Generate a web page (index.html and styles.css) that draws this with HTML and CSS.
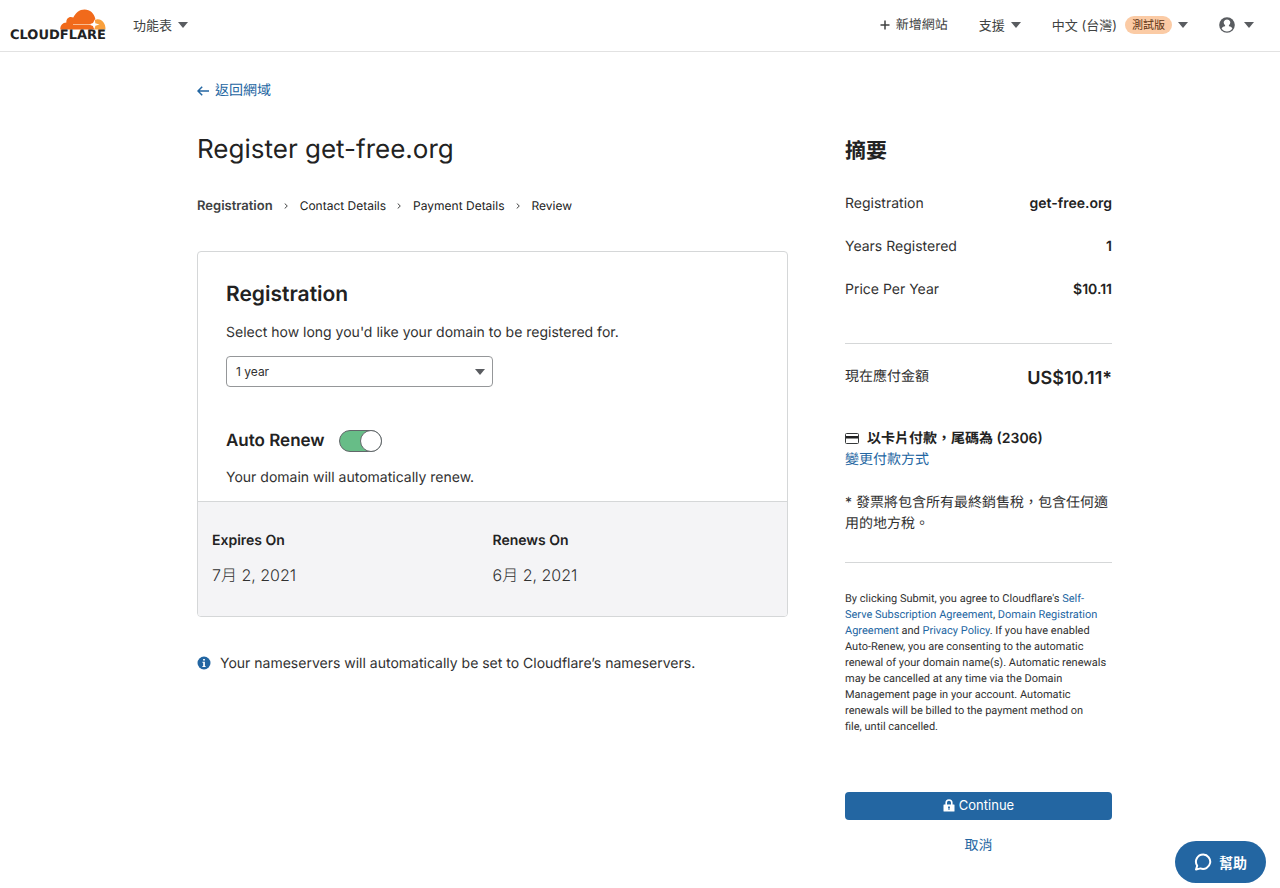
FILE: index.html
```html
<!DOCTYPE html>
<html lang="zh-Hant-TW">
<head>
<meta charset="utf-8">
<meta name="viewport" content="width=device-width, initial-scale=1">
<title>Register get-free.org | Cloudflare</title>
<link rel="stylesheet" href="styles.css">
</head>
<body>
<header class="topbar">
  <a class="logo" href="#" aria-label="Cloudflare">
    <svg class="logo-cloud" viewBox="0 0 46 21" aria-hidden="true">
      <path fill="#f9a03c" d="M34 20.500C33.500 15 33.500 11 37 10.300C42 9.800 45.600 14.200 45.500 20.500Z"/>
      <path fill="#f16a1b" d="M.3 20.500C.2 16.200 2.600 13.700 6.400 13.500C5.900 9.500 9.500 6.700 13.300 8.600C15.400 3.800 19.500.4 24.600.4C30 .4 34.100 4.200 35.300 9.700L34.500 20.500Z"/>
      <path fill="#fff" d="M34.900 10.200L35.300 14.300L39.500 15.500L35.400 16.700L34.300 20.500L32.900 16.900L29 15.500L33 14Z"/>
      <path fill="none" stroke="#fbd0ad" stroke-width=".8" d="M13 15.500H31"/>
    </svg>
    <span class="wordmark">CLOUDFLARE</span>
  </a>
  <button class="nav-item" type="button">功能表<svg class="caret" viewBox="0 0 10 6" aria-hidden="true"><path d="M0 0H10L5 6Z"/></svg></button>
  <nav class="topnav">
    <a class="nav-item add-site" href="#"><svg class="plus" viewBox="0 0 10 10" aria-hidden="true"><path d="M5 .5V9.500M.5 5H9.500"/></svg>新增網站</a>
    <button class="nav-item" type="button">支援<svg class="caret" viewBox="0 0 10 6" aria-hidden="true"><path d="M0 0H10L5 6Z"/></svg></button>
    <button class="nav-item" type="button">中文 (台灣)<span class="badge">測試版</span><svg class="caret" viewBox="0 0 10 6" aria-hidden="true"><path d="M0 0H10L5 6Z"/></svg></button>
    <button class="nav-item account" type="button" aria-label="Account"><svg class="user" viewBox="0 0 16 16" aria-hidden="true"><circle cx="8" cy="8" r="7.800" fill="#595c60"/><path fill="#fff" d="M8 2.400A3.200 3.200 0 0 1 9.900 8.200V9.200C11.700 9.600 12.900 10.300 13.400 11.500A6.300 6.300 0 0 1 2.600 11.500C3.100 10.300 4.300 9.600 6.100 9.200V8.200A3.200 3.200 0 0 1 8 2.400Z"/></svg><svg class="caret" viewBox="0 0 10 6" aria-hidden="true"><path d="M0 0H10L5 6Z"/></svg></button>
  </nav>
</header>

<main class="page">
  <a class="back" href="#"><svg class="arrow" viewBox="0 0 12 10" aria-hidden="true"><path d="M12 5H1M5.200 .8L1 5L5.200 9.200"/></svg>返回網域</a>
  <div class="columns">
    <section class="main-col">
      <h1 class="title">Register get-free.org</h1>
      <ol class="steps">
        <li class="step current" aria-current="step">Registration</li>
        <li class="step"><svg class="chevron" viewBox="0 0 4 6" aria-hidden="true"><path d="M.7.5L3.300 3L.7 5.500"/></svg>Contact Details</li>
        <li class="step"><svg class="chevron" viewBox="0 0 4 6" aria-hidden="true"><path d="M.7.5L3.300 3L.7 5.500"/></svg>Payment Details</li>
        <li class="step"><svg class="chevron" viewBox="0 0 4 6" aria-hidden="true"><path d="M.7.5L3.300 3L.7 5.500"/></svg>Review</li>
      </ol>
      <div class="card">
        <div class="card-body">
          <h2 class="card-title">Registration</h2>
          <label class="text" for="years">Select how long you'd like your domain to be registered for.</label>
          <div class="select-wrap">
            <select class="select" id="years"><option>1 year</option><option>2 years</option><option>3 years</option></select>
            <svg class="caret select-caret" viewBox="0 0 10 6" aria-hidden="true"><path d="M0 0H10L5 6Z"/></svg>
          </div>
          <div class="renew">
            <label class="renew-title" for="auto-renew">Auto Renew</label>
            <input class="toggle" id="auto-renew" type="checkbox" role="switch" checked>
          </div>
          <p class="text">Your domain will automatically renew.</p>
        </div>
        <dl class="dates">
          <div><dt>Expires On</dt><dd>7月 2, 2021</dd></div>
          <div><dt>Renews On</dt><dd>6月 2, 2021</dd></div>
        </dl>
      </div>
      <p class="notice"><svg class="info" viewBox="0 0 14 14" aria-hidden="true"><circle cx="7" cy="7" r="6.500" fill="#2366a2"/><path fill="#fff" d="M6.100 3H7.900V4.600H6.100ZM5.400 5.800H7.900V10H8.600V11H5.400V10H6.200V6.800H5.400Z"/></svg>Your nameservers will automatically be set to Cloudflare’s nameservers.</p>
    </section>

    <aside class="summary">
      <h2 class="summary-title">摘要</h2>
      <dl class="facts">
        <div><dt>Registration</dt><dd>get-free.org</dd></div>
        <div><dt>Years Registered</dt><dd>1</dd></div>
        <div><dt>Price Per Year</dt><dd>$10.11</dd></div>
      </dl>
      <dl class="total"><dt>現在應付金額</dt><dd>US$10.11*</dd></dl>
      <p class="payment"><svg class="card-icon" viewBox="0 0 14 11" aria-hidden="true"><rect x=".5" y=".5" width="13" height="10" rx="1" fill="#fff" stroke="#36393a"/><path fill="#222" d="M1 3H13V5.500H1Z"/></svg>以卡片付款，尾碼為 (2306)</p>
      <a class="change" href="#">變更付款方式</a>
      <p class="tax">* 發票將包含所有最終銷售稅，包含任何適用的地方稅。</p>
      <p class="legal">By clicking Submit, you agree to Cloudflare's <a href="#">Self-<br>Serve Subscription Agreement</a>, <a href="#">Domain Registration Agreement</a> and <a href="#">Privacy Policy</a>. If you have enabled Auto-Renew, you are consenting to the automatic renewal of your domain name(s). Automatic renewals may be cancelled at any time via the Domain Management page in your account. Automatic renewals will be billed to the payment method on <br>file, until cancelled.</p>
      <button class="continue" type="button"><svg class="lock" viewBox="0 0 12 13" aria-hidden="true"><path fill="none" stroke="#fff" stroke-width="1.600" d="M3.200 6V3.800A2.800 2.800 0 0 1 8.800 3.800V6"/><path fill="#fff" fill-rule="evenodd" d="M1 5.500H11Q11.500 5.500 11.500 6V12Q11.500 12.500 11 12.500H1Q.5 12.500.5 12V6Q.5 5.500 1 5.500ZM6 7.300A1.100 1.100 0 0 0 5.500 9.300V11H6.500V9.300A1.100 1.100 0 0 0 6 7.300Z"/></svg>Continue</button>
      <a class="cancel" href="#">取消</a>
    </aside>
  </div>
</main>

<button class="help" type="button"><svg class="bubble" viewBox="0 0 18 18" aria-hidden="true"><path d="M9.300 1.500A7.200 7.200 0 1 1 6.400 15.400L2 16.600L3.200 12.700A7.200 7.200 0 0 1 9.300 1.500Z"/></svg>幫助</button>
</body>
</html>
```

FILE: styles.css
```css
* { box-sizing: border-box; }

body {
  margin: 0;
  background: #fff;
  color: #313131;
  font-family: Inter, "Noto Sans CJK TC", sans-serif;
  font-size: 14px;
  line-height: 21px;
  text-rendering: geometricPrecision;
}

h1, h2, p, ol, dl, dd { margin: 0; }
a { color: #2366a2; text-decoration: none; }
button, select { font: inherit; color: inherit; }
button { cursor: pointer; }

/* Top bar */
.topbar {
  display: flex;
  align-items: center;
  height: 52px;
  padding: 0 26px 1px 10px;
  border-bottom: 1px solid #e2e2e2;
}

.logo {
  display: flex;
  flex-direction: column;
  align-items: flex-end;
  margin-right: 27px;
  color: #222;
}
.logo-cloud { width: 46px; height: 21px; }
.wordmark {
  font: bold 13px/12px "DejaVu Sans", sans-serif;
}

.nav-item {
  display: flex;
  align-items: center;
  gap: 6px;
  padding: 0;
  border: 0;
  background: none;
  color: #404242;
  font-size: 13px;
  line-height: 20px;
}
.caret { width: 10px; height: 6px; fill: #595c60; }
.topnav {
  display: flex;
  gap: 31px;
  margin-left: auto;
}
.plus { width: 10px; height: 10px; fill: none; stroke: #404242; stroke-width: 1.5; }
.badge {
  padding: 0 7px;
  margin-left: 2px;
  border-radius: 10px;
  background: #fbcba5;
  color: #5c3313;
  font-size: 11px;
  line-height: 18px;
}
.account { gap: 9px; }
.user { width: 16px; height: 16px; }

/* Page */
.page {
  max-width: 944px;
  margin: 0 auto;
  padding: 28px 0 32px 29px;
}
.back { display: inline-flex; align-items: center; gap: 6px; }
.arrow { width: 12px; height: 10px; fill: none; stroke: #2366a2; stroke-width: 1.5; }
.columns {
  display: grid;
  grid-template-columns: 591fr 267fr;
  gap: 57px;
  margin-top: 28px;
}

.title {
  color: #222;
  font-size: 26px;
  font-weight: 400;
  line-height: 40px;
}
.steps {
  display: flex;
  gap: 11px;
  margin-top: 26px;
  padding: 0;
  list-style: none;
  color: #222;
  font-size: 12px;
  line-height: 20px;
}
.step { display: flex; align-items: center; gap: 12px; }
.current { color: #404242; font-size: 13px; font-weight: 600; }
.chevron { width: 4px; height: 6px; fill: none; stroke: #404242; stroke-width: 1; }

/* Registration card */
.card {
  margin-top: 35px;
  border: 1px solid #d5d7d8;
  border-radius: 4px;
  overflow: hidden;
}
.card-body { padding: 28px 28px 13px; }
.card-title {
  margin-bottom: 12px;
  color: #222;
  font-size: 21px;
  font-weight: 600;
  line-height: 30px;
}
.text { display: block; }
.select-wrap { position: relative; width: 50%; margin-top: 13px; }
.select {
  display: block;
  width: 100%;
  height: 31px;
  padding: 0 9px;
  border: 1px solid #959799;
  border-radius: 4px;
  appearance: none;
  background: #fff;
  font-size: 12px;
}
.select-caret {
  position: absolute;
  top: 13px;
  right: 8px;
  pointer-events: none;
}
.renew {
  display: flex;
  align-items: center;
  gap: 14px;
  margin: 41px 0 13px;
}
.renew-title {
  color: #222;
  font-size: 17px;
  font-weight: 600;
  line-height: 26px;
}
.toggle {
  width: 43px;
  height: 22px;
  margin: 0;
  border: 1px solid #62676a;
  border-radius: 11px;
  appearance: none;
  background: #67bd87;
}
.toggle::before {
  content: "";
  display: block;
  box-sizing: border-box;
  width: 22px;
  height: 22px;
  margin: -1px;
  border: 1px solid #62676a;
  border-radius: 50%;
  background: #fff;
}
.toggle:checked::before { margin-left: 20px; }

.dates {
  display: grid;
  grid-template-columns: 1fr 1fr;
  padding: 28px 14px 28px;
  border-top: 1px solid #d5d7d8;
  background: #f4f4f6;
}
.dates dt { color: #222; font-weight: 600; }
.dates dd {
  margin-top: 12px;
  font-size: 16px;
  font-weight: 300;
  line-height: 25px;
}
.notice {
  display: flex;
  align-items: center;
  gap: 9px;
  margin-top: 36px;
}
.info { width: 14px; height: 14px; }

/* Summary */
.summary { display: flex; flex-direction: column; }
.summary-title {
  margin-top: 6px;
  color: #222;
  font-size: 21px;
  font-weight: 600;
  line-height: 32px;
}
.facts {
  display: grid;
  gap: 22px;
  margin-top: 25px;
  padding-bottom: 43px;
  border-bottom: 1px solid #d5d7d8;
}
.facts div, .total { display: flex; justify-content: space-between; }
.facts dd, .total dd { color: #222; font-weight: 600; }
.total { margin-top: 22px; }
.total dd { font-size: 18px; line-height: 26px; }
.payment {
  display: flex;
  align-items: center;
  gap: 8px;
  margin-top: 36px;
  color: #222;
  font-weight: 600;
}
.card-icon { width: 14px; height: 11px; }
.change { align-self: flex-start; }
.tax {
  margin-top: 22px;
  padding-bottom: 28px;
  border-bottom: 1px solid #d5d7d8;
}
.legal {
  margin-top: 28px;
  font-family: Roboto, sans-serif;
  font-size: 11px;
  line-height: 16px;
}
.continue {
  display: flex;
  align-items: center;
  justify-content: center;
  gap: 4px;
  height: 28px;
  margin-top: 57px;
  border: 0;
  border-radius: 4px;
  background: #2366a2;
  color: #fff;
  font-size: 13px;
}
.lock { width: 12px; height: 13px; }
.cancel { align-self: center; margin-top: 15px; }

.help {
  position: fixed;
  right: 14px;
  bottom: 5px;
  display: flex;
  align-items: center;
  gap: 7px;
  height: 42px;
  padding: 0 19px;
  border: 0;
  border-radius: 21px;
  background: #2366a2;
  color: #fff;
  font-size: 14px;
  font-weight: 700;
}
.bubble { width: 18px; height: 18px; fill: none; stroke: #fff; stroke-width: 2; stroke-linejoin: round; }
```
